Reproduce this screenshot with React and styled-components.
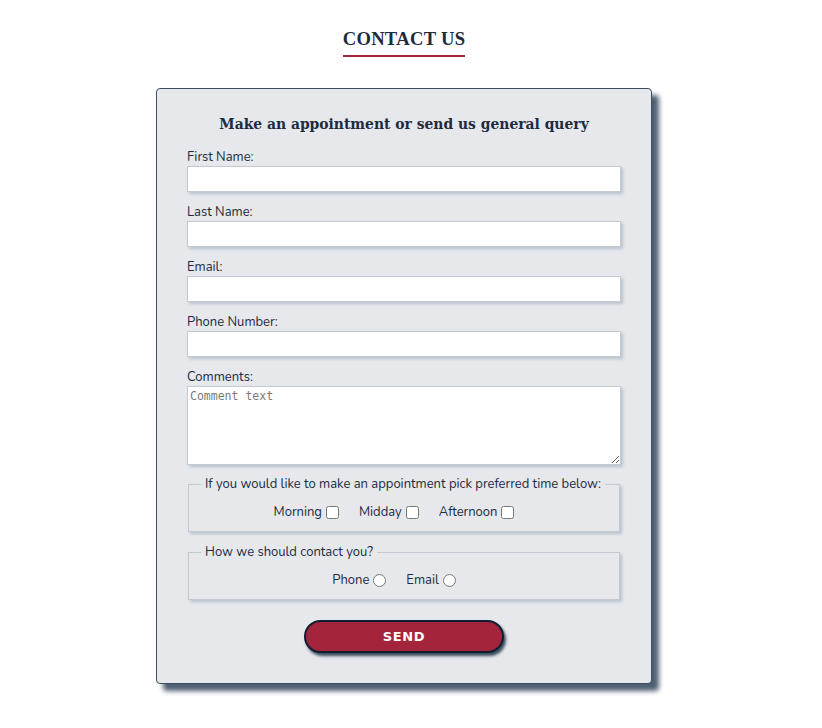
import React from 'react';
import styled, { createGlobalStyle } from 'styled-components';

const GlobalStyle = createGlobalStyle`
  html, body {
    margin: 0;
    padding: 0;
    background: #ffffff;
  }
  body {
    font-family: 'Nunito', 'Lato', 'Noto Sans', sans-serif;
    color: #1d2b3f;
  }
`;

const Page = styled.div`
  display: flex;
  flex-direction: column;
  align-items: center;
  padding: 28px 14px 40px 0;
`;

const Title = styled.h2`
  margin: 0 0 31px;
  font-family: 'Liberation Serif', 'DejaVu Serif', serif;
  font-size: 18.6px;
  line-height: 22px;
  font-weight: bold;
  letter-spacing: 0.3px;
  color: #1d2b3f;
  padding-bottom: 5px;
  border-bottom: 2px solid #a4243b;
`;

const Card = styled.form`
  width: 434px;
  padding: 27px 30px 30px;
  background: #e6e8ec;
  border: 1px solid #3d4d60;
  border-radius: 4px;
  box-shadow: 7px 7px 5px #4e5f73;
  display: flex;
  flex-direction: column;
`;

const Subtitle = styled.h3`
  margin: 0 0 16px;
  text-align: center;
  font-family: 'DejaVu Serif', 'Liberation Serif', serif;
  font-size: 13.9px;
  font-weight: bold;
  color: #1d2b3f;
`;

const Field = styled.div`
  display: flex;
  flex-direction: column;
  margin-bottom: 11px;
`;

const Label = styled.label`
  font-size: 13px;
  line-height: 18px;
  color: #1d2b3f;
`;

const TextInput = styled.input`
  box-sizing: border-box;
  width: 100%;
  height: 26px;
  margin: 0;
  border: 1px solid #c3cad4;
  background: #fff;
  box-shadow: 2px 2px 3px #b9c2cd;
  font-size: 13px;
`;

const TextArea = styled.textarea`
  box-sizing: border-box;
  width: 100%;
  height: 79px;
  margin: 0;
  padding: 2px 2px;
  border: 1px solid #c3cad4;
  background: #fff;
  box-shadow: 2px 2px 3px #b9c2cd;
  font-family: 'DejaVu Sans Mono', 'Liberation Mono', monospace;
  font-size: 11.5px;
  &::placeholder {
    color: #7a7a7a;
  }
`;

const Group = styled.fieldset`
  margin: ${p => p.$top}px 1px 0;
  padding: 10px 10px 9px;
  border: 1px solid #c3cad4;
  box-shadow: 2px 2px 3px #b9c2cd;
`;

const Legend = styled.legend`
  margin-left: 2px;
  padding: 0 4px;
  font-size: 13px;
  line-height: 16px;
  color: #1d2b3f;
`;

const Options = styled.div`
  display: flex;
  justify-content: center;
`;

const Option = styled.label`
  display: flex;
  align-items: center;
  margin-right: 20px;
  font-size: 13px;
  line-height: 20px;
  color: #1d2b3f;
  input {
    margin: 0 0 0 4px;
    width: 13px;
    height: 13px;
  }
`;

const SendButton = styled.button`
  align-self: center;
  margin-top: 20px;
  width: 200px;
  height: 33px;
  border: 2px solid #0f1f33;
  border-radius: 17px;
  background: #a4243b;
  color: #fff;
  font-family: 'DejaVu Sans', 'Noto Sans', sans-serif;
  font-weight: bold;
  font-size: 13px;
  letter-spacing: 0.6px;
  box-shadow: 2px 3px 3px #3b4b5e;
  cursor: pointer;
`;

const fields = ['First Name:', 'Last Name:', 'Email:', 'Phone Number:'];

export default function App() {
  return (
    <>
      <GlobalStyle />
      <Page>
        <Title>CONTACT US</Title>
        <Card onSubmit={e => e.preventDefault()}>
          <Subtitle>Make an appointment or send us general query</Subtitle>
          {fields.map(f => (
            <Field key={f}>
              <Label>{f}</Label>
              <TextInput type="text" />
            </Field>
          ))}
          <Field>
            <Label>Comments:</Label>
            <TextArea placeholder="Comment text" />
          </Field>
          <Group $top={0}>
            <Legend>If you would like to make an appointment pick preferred time below:</Legend>
            <Options>
              <Option>Morning <input type="checkbox" /></Option>
              <Option>Midday <input type="checkbox" /></Option>
              <Option>Afternoon <input type="checkbox" /></Option>
            </Options>
          </Group>
          <Group $top={12}>
            <Legend>How we should contact you?</Legend>
            <Options>
              <Option>Phone <input type="radio" name="contact" /></Option>
              <Option>Email <input type="radio" name="contact" /></Option>
            </Options>
          </Group>
          <SendButton type="submit">SEND</SendButton>
        </Card>
      </Page>
    </>
  );
}
